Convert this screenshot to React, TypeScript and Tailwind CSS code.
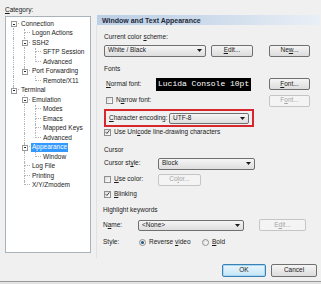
import React from 'react';

type Row = {
  text: string;
  level: number;
  rails: boolean[]; // vertical rails of ancestor columns
  later: boolean; // has a later sibling
  box?: boolean;
  first?: boolean;
  selected?: boolean;
};

const tree: Row[] = [
  { text: 'Connection', level: 0, rails: [], later: true, box: true, first: true },
  { text: 'Logon Actions', level: 1, rails: [true], later: true },
  { text: 'SSH2', level: 1, rails: [true], later: true, box: true },
  { text: 'SFTP Session', level: 2, rails: [true, true], later: true },
  { text: 'Advanced', level: 2, rails: [true, true], later: false },
  { text: 'Port Forwarding', level: 1, rails: [true], later: false, box: true },
  { text: 'Remote/X11', level: 2, rails: [true, false], later: false },
  { text: 'Terminal', level: 0, rails: [], later: false, box: true },
  { text: 'Emulation', level: 1, rails: [false], later: true, box: true },
  { text: 'Modes', level: 2, rails: [false, true], later: true },
  { text: 'Emacs', level: 2, rails: [false, true], later: true },
  { text: 'Mapped Keys', level: 2, rails: [false, true], later: true },
  { text: 'Advanced', level: 2, rails: [false, true], later: false },
  { text: 'Appearance', level: 1, rails: [false], later: true, box: true, selected: true },
  { text: 'Window', level: 2, rails: [false, true], later: false },
  { text: 'Log File', level: 1, rails: [false], later: true },
  { text: 'Printing', level: 1, rails: [false], later: true },
  { text: 'X/Y/Zmodem', level: 1, rails: [false], later: false },
];

const dot = 'border-dotted border-[#b4b4b4]';

function TreeRow({ row }: { row: Row }) {
  return (
    <div className="flex h-[9.5px] items-stretch">
      {row.rails.map((on, i) => (
        <div key={i} className="w-[11px] h-full">
          {on && <div className={`ml-[5px] h-full w-0 border-l ${dot}`} />}
        </div>
      ))}
      <div className="w-[11px] h-full relative flex flex-col">
        <div className={`ml-[5px] h-1/2 w-[6px] border-b ${dot} ${row.first ? '' : 'border-l'}`} />
        <div className={`ml-[5px] h-1/2 w-0 ${row.later ? `border-l ${dot}` : ''}`} />
        {row.box && (
          <div className="absolute left-[2.5px] top-[2px] w-[6px] h-[6px] border border-[#9a9a9a] bg-white flex items-center justify-center">
            <div className="w-[2px] h-px bg-[#2b2b2b]" />
          </div>
        )}
      </div>
      <div
        className={`ml-px px-px h-full flex items-center leading-none ${
          row.selected ? 'bg-[#3399ff] text-white' : ''
        }`}
      >
        {row.text}
      </div>
    </div>
  );
}

function Arrow() {
  return (
    <svg width="5" height="3" viewBox="0 0 5 3">
      <polygon points="0,0 5,0 2.5,3" fill="#1a1a1a" />
    </svg>
  );
}

function Btn({ children, w, disabled, def }: { children: React.ReactNode; w: string; disabled?: boolean; def?: boolean }) {
  const base = 'h-[12px] rounded-[2px] border flex items-center justify-center leading-none';
  const look = disabled
    ? 'border-[#c3c6c9] bg-[#f4f4f4] text-[#a5a5a5]'
    : def
    ? 'border-[#3c7fb1] bg-linear-to-b from-[#eaf6fd] to-[#c4e5f6] shadow-[inset_0_0_0_1px_#a7d9f5]'
    : 'border-[#707070] bg-linear-to-b from-[#f5f5f5] to-[#dcdcdc]';
  return <div className={`${base} ${look} ${w}`}>{children}</div>;
}

function Combo({ value, w, h = 'h-[12px]' }: { value: string; w: string; h?: string }) {
  return (
    <div
      className={`${w} ${h} rounded-[2px] border border-[#707070] bg-linear-to-b from-[#f5f5f5] to-[#dedede] flex items-center justify-between pl-[3px] pr-[3px] leading-none`}
    >
      <span>{value}</span>
      <Arrow />
    </div>
  );
}

function Check({ checked }: { checked?: boolean }) {
  return (
    <div className="w-[7px] h-[7px] border border-[#8f8f8f] bg-linear-to-br from-[#dcdcdc] to-white flex items-center justify-center shrink-0">
      {checked && (
        <svg width="6" height="6" viewBox="0 0 6 6">
          <polyline points="0.8,3.2 2.3,4.8 5.2,1" fill="none" stroke="#333" strokeWidth="1.1" />
        </svg>
      )}
    </div>
  );
}

function Radio({ checked }: { checked?: boolean }) {
  return (
    <div className="w-[7px] h-[7px] rounded-full border border-[#8f8f8f] bg-linear-to-br from-[#dcdcdc] to-white flex items-center justify-center shrink-0">
      {checked && <div className="w-[3px] h-[3px] rounded-full bg-[#1c5180]" />}
    </div>
  );
}

export default function App() {
  return (
    <div
      className="w-[321px] h-[284px] bg-[#f0f0f0] text-[#1a1a1a] text-[6.5px] overflow-hidden flex flex-col"
      style={{ fontFamily: '"Liberation Sans", Arial, sans-serif' }}
    >
      <div className="flex h-[260px]">
        {/* left: category tree */}
        <div className="w-[96px] pl-[5px] pt-[5px] flex flex-col">
          <div className="h-[10px] flex items-center leading-none">
            <span><span className="underline">C</span>ategory:</span>
          </div>
          <div className="mt-px w-[86px] h-[237px] border border-[#a9b3bc] bg-white pt-[2px] pl-[2px]">
            {tree.map((r, i) => (
              <TreeRow key={i} row={r} />
            ))}
          </div>
        </div>

        {/* right: options */}
        <div className="flex-1 pt-[15px] flex flex-col">
          <div className="ml-px mr-px h-[10px] bg-linear-to-r from-[#bccfe6] via-[#cddbeb] to-[#e9eff6] flex items-center pl-[5px] font-bold text-[7px] leading-none text-[#1e2a3a]">
            Window and Text Appearance
          </div>

          <div className="pl-[7px] flex flex-col border-l border-[#e2e2e2] h-[233px]">
            <div className="mt-[8px] h-[8px] flex items-center leading-none">
              <span>Current color <span className="underline">s</span>cheme:</span>
            </div>
            <div className="mt-[3px] h-[13px] flex items-center">
              <Combo value="White / Black" w="w-[102px]" />
              <div className="ml-[5px]">
                <Btn w="w-[42px]"><span><span className="underline">E</span>dit...</span></Btn>
              </div>
              <div className="ml-[16px]">
                <Btn w="w-[41px]"><span>Ne<span className="underline">w</span>...</span></Btn>
              </div>
            </div>

            <div className="mt-[8px] h-[8px] flex items-center leading-none">Fonts</div>
            <div className="mt-[4px] h-[14px] flex items-center">
              <div className="w-[52px] pl-[2px] leading-none">
                <span className="underline">N</span>ormal font:
              </div>
              <div
                className="w-[95px] h-[13px] bg-black text-white flex items-center pl-[2px] text-[8px] leading-none"
                style={{ fontFamily: '"Liberation Mono", "Courier New", monospace' }}
              >
                Lucida Console 10pt
              </div>
              <div className="ml-[18px]">
                <Btn w="w-[41px]"><span><span className="underline">F</span>ont...</span></Btn>
              </div>
            </div>

            <div className="mt-[3px] h-[13px] flex items-center">
              <div className="w-[165px] pl-[2px] flex items-center gap-[3px] leading-none">
                <Check />
                <span>N<span className="underline">a</span>rrow font:</span>
              </div>
              <Btn w="w-[41px]" disabled>
                <span>F<span className="underline">o</span>nt...</span>
              </Btn>
            </div>

            <div className="mt-[2px] w-[150px] h-[18px] border-2 border-[#d8262e] flex items-center pl-[3px]">
              <div className="w-[60px] leading-none">
                <span><span className="underline">C</span>haracter encoding:</span>
              </div>
              <Combo value="UTF-8" w="w-[80px]" h="h-[11px]" />
            </div>

            <div className="h-[10px] flex items-center gap-[3px] leading-none">
              <Check checked />
              <span>Use Uni<span className="underline">c</span>ode line-drawing characters</span>
            </div>

            <div className="mt-[9px] h-[8px] flex items-center leading-none">Cursor</div>
            <div className="mt-[3px] h-[13px] flex items-center">
              <div className="w-[54px] leading-none">
                <span>Cursor st<span className="underline">y</span>le:</span>
              </div>
              <Combo value="Block" w="w-[97px]" />
            </div>
            <div className="mt-[3px] h-[13px] flex items-center">
              <div className="w-[54px] flex items-center gap-[3px] leading-none">
                <Check />
                <span><span className="underline">U</span>se color:</span>
              </div>
              <Btn w="w-[43px]" disabled>
                <span>Co<span className="underline">l</span>or...</span>
              </Btn>
            </div>
            <div className="mt-[3px] h-[10px] flex items-center gap-[3px] leading-none">
              <Check checked />
              <span><span className="underline">B</span>linking</span>
            </div>

            <div className="mt-[7px] h-[8px] flex items-center leading-none -ml-px">Highlight keywords</div>
            <div className="mt-[4px] h-[14px] flex items-center -ml-px">
              <div className="w-[35px] leading-none">
                <span>N<span className="underline">a</span>me:</span>
              </div>
              <Combo value="<None>" w="w-[106px]" h="h-[11px]" />
              <div className="ml-[15px]">
                <Btn w="w-[47px]" disabled>
                  <span>E<span className="underline">d</span>it...</span>
                </Btn>
              </div>
            </div>
            <div className="mt-[5px] h-[10px] flex items-center leading-none -ml-px">
              <div className="w-[36px]">Style:</div>
              <div className="w-[63px] flex items-center gap-[3px]">
                <Radio checked />
                <span>Reverse <span className="underline">v</span>ideo</span>
              </div>
              <div className="flex items-center gap-[3px]">
                <Radio />
                <span><span className="underline">B</span>old</span>
              </div>
            </div>
          </div>
        </div>
      </div>

      {/* dialog buttons */}
      <div className="mt-[3px] h-[14px] flex items-center justify-end pr-[4px] gap-[5px]">
        <Btn w="w-[44px] h-[13px]" def>OK</Btn>
        <Btn w="w-[46px] h-[13px]">Cancel</Btn>
      </div>
      <div className="mt-[4px] h-px bg-[#9a9a9a]" />
      <div className="flex-1 bg-[#e3e3e3]" />
    </div>
  );
}
